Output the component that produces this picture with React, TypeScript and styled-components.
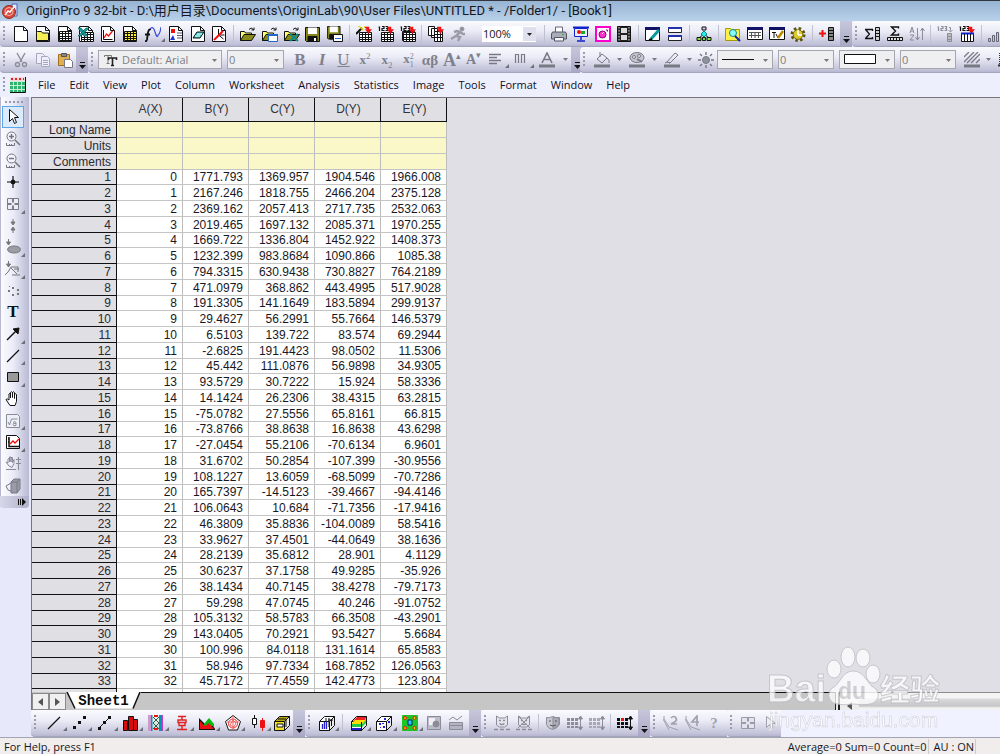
import React from 'react';
import styled, { createGlobalStyle, css } from 'styled-components';

const UI = '"Open Sans", "Noto Sans", "Noto Sans CJK SC", sans-serif';
const GREY = '#8b8d98';

const GlobalStyle = createGlobalStyle`
  * { box-sizing: border-box; }
  body { margin: 0; background: #e6e8fa; font-family: ${UI}; color: #1a1a22; }
  button, select { font: inherit; color: inherit; margin: 0; padding: 0; border: 0; background: none; }
`;

const Window = styled.div`
  display: flex;
  flex-direction: column;
  height: 100vh;
  min-width: 0;
  overflow: hidden;
`;

const TitleBar = styled.header`
  display: flex;
  align-items: center;
  gap: 8px;
  height: 21px;
  flex: none;
  padding: 0 2px;
  border-top: 1px solid #33363c;
  background: linear-gradient(#97b3d3, #b9d1ea);
`;

const Title = styled.h1`
  margin: 0;
  font-family: Roboto, "Noto Sans CJK SC", sans-serif;
  font-size: 13px;
  line-height: 18px;
  font-weight: 400;
  color: #15181e;
  white-space: nowrap;
`;

const DockRow = styled.div`
  display: flex;
  flex: none;
  height: 26px;
  overflow: hidden;
  background: #e9ebfa;
`;

const Bar = styled.div<{ $w?: number }>`
  display: flex;
  align-items: center;
  flex: none;
  height: 100%;
  ${p => p.$w && css`width: ${p.$w}px;`}
  border-bottom: 1px solid #a3a5bd;
  border-radius: 4px 0 0 4px;
  background: linear-gradient(#fafbfe 0%, #ebecf6 40%, #c3c3da 90%, #b5b5cf 100%);
`;

const Grip = styled.i`
  flex: none;
  width: 3px;
  height: 16px;
  margin: 0 4px 0 3px;
  background: radial-gradient(circle at 1px 1px, #9a9cae 1px, transparent 1px) 0 0 / 3px 4px;
`;

const Group = styled.div`
  display: flex;
  align-items: center;
  flex: none;
`;

const Tool = styled.button<{ $w?: number }>`
  display: flex;
  align-items: center;
  justify-content: center;
  position: relative;
  flex: none;
  width: ${p => p.$w ?? 22}px;
  height: 22px;
  ${p => !p.$w && css`&:nth-child(3n) { width: 21px; }`}
`;

const Corner = styled.i`
  position: absolute;
  right: 0;
  bottom: 3px;
  border: 2px solid transparent;
  border-right-color: #6d6f78;
  border-bottom-color: #6d6f78;
`;

const Glyph = styled.span<{ $size?: number; $italic?: boolean; $under?: boolean; $color?: string; $bold?: boolean }>`
  font-family: "Liberation Serif", serif;
  font-size: ${p => p.$size ?? 17}px;
  line-height: 18px;
  font-weight: ${p => (p.$bold ? 700 : 400)};
  font-style: ${p => (p.$italic ? 'italic' : 'normal')};
  text-decoration: ${p => (p.$under ? 'underline' : 'none')};
  color: ${p => p.$color ?? '#7f818c'};
  white-space: nowrap;
  sup, sub { font-size: 9px; line-height: 0; font-weight: 400; }
`;

const Scripts = styled.span`
  display: inline-flex;
  flex-direction: column;
  vertical-align: middle;
  font-size: 8px;
  line-height: 8px;
  font-weight: 400;
`;

const Sep = styled.i`
  flex: none;
  width: 1px;
  height: 18px;
  margin: 0 3px;
  background: #c0c1d0;
`;

const OverflowButton = styled.button`
  display: flex;
  flex: none;
  align-items: flex-end;
  justify-content: center;
  width: 12px;
  height: 100%;
  margin-left: auto;
  padding-bottom: 3px;
  background: linear-gradient(#c6c7db, #a9a9c6);
`;

const Caret = styled.button`
  display: flex;
  align-items: center;
  justify-content: center;
  flex: none;
  width: 11px;
  height: 20px;
`;

const ComboBox = styled.label<{ $w: number; $live?: boolean }>`
  position: relative;
  display: flex;
  align-items: center;
  flex: none;
  width: ${p => p.$w}px;
  height: ${p => (p.$live ? 16 : 19)}px;
  margin-right: 5px;
  ${p => p.$live && css`margin-left: 13px;`}
  border: ${p => (p.$live ? '0' : '1px solid #a6a7ae')};
  background: ${p => (p.$live ? '#fff' : '#efeff1')};
  font-size: 11px;
  color: ${p => (p.$live ? '#16161c' : '#7d7e86')};
  select {
    width: 100%;
    height: 100%;
    padding-left: ${p => (p.$w > 100 ? 23 : 1)}px;
    appearance: none;
    outline: 0;
    line-height: 16px;
  }
  svg { position: absolute; pointer-events: none; }
  .mark { left: 3px; }
  .arrow { right: 0; }
`;

const MenuBar = styled.nav`
  display: flex;
  align-items: center;
  flex: none;
  height: 24px;
  background: #eeeffc;
`;

const MenuItem = styled.button`
  margin-right: 14px;
  font-size: 11px;
  line-height: 20px;
  font-weight: 500;
  color: #10101f;
`;

const BookButton = styled.button`
  display: flex;
  margin-right: 12px;
`;

const Body = styled.div`
  display: flex;
  flex: 1;
  min-height: 0;
`;

const SideDock = styled.aside`
  flex: none;
  width: 31px;
  background: #e7e9fb;
`;

const SideBar = styled.div`
  display: flex;
  flex-direction: column;
  width: 29px;
  padding: 3px 0 0 1px;
  border-left: 1px solid #b6b8d2;
  border-radius: 0 0 4px 4px;
  background: linear-gradient(90deg, #fbfcff, #e9ebf7 45%, #b9bad3);
`;

const SideGrip = styled.i`
  width: 18px;
  height: 3px;
  margin: 1px 0 2px 3px;
  background: radial-gradient(circle at 1px 1px, #9a9cae 1px, transparent 1px) 0 0 / 4px 3px;
`;

const SideTool = styled.button<{ $active?: boolean }>`
  position: relative;
  display: flex;
  align-items: center;
  justify-content: center;
  width: 22px;
  height: 22px;
  border: 1px solid ${p => (p.$active ? '#59a7e8' : 'transparent')};
  background: ${p => (p.$active ? '#dcebfb' : 'none')};
  &:nth-child(3n) { height: 21px; }
  ${Corner} { right: -2px; bottom: 0; }
`;

const SideOverflow = styled.button`
  display: flex;
  align-items: center;
  justify-content: flex-end;
  height: 12px;
  margin-left: -2px;
  padding-right: 3px;
  border-radius: 0 0 4px 4px;
  background: linear-gradient(90deg, #d6d7e8, #b0b1cb);
`;

const Main = styled.main`
  display: flex;
  flex-direction: column;
  flex: 1;
  min-width: 0;
`;

const Workspace = styled.section`
  flex: 1;
  min-height: 0;
  overflow: hidden;
  border-top: 1px solid #77777b;
  border-left: 1px solid #77777b;
  background: #e0dfe5;
`;

const Sheet = styled.table`
  width: 415px;
  table-layout: fixed;
  border-collapse: separate;
  border-spacing: 0;
  font-family: "Liberation Sans", Arial, sans-serif;
  font-size: 12px;
  line-height: 14px;
  th, td { padding: 0 5px 0 0; text-align: right; font-weight: 400; white-space: nowrap; }
`;

const ColumnHead = styled.th`
  height: 24px;
  && { padding: 0 0 2px 2px; text-align: center; }
  border-right: 1px solid #111;
  border-bottom: 1px solid #111;
  background: #e0dfe4;
  color: #33343a;
`;

const SheetRow = styled.tr`
  height: 16px;
  &:nth-child(4n) { height: 15px; }
`;

const RowHead = styled.th`
  border-right: 1px solid #111;
  border-bottom: 1px solid #111;
  background: #e0dfe4;
  color: #2a2a33;
`;

const Cell = styled.td<{ $label?: boolean }>`
  border-right: 1px solid #bdbdbd;
  border-bottom: 1px solid #c4c4c4;
  background: ${p => (p.$label ? '#faf8c8' : '#fff')};
  color: #18181f;
`;

const SheetTabs = styled.div`
  display: flex;
  flex: none;
  height: 18px;
  background: #c6c6c6;
  border-left: 1px solid #77777b;
`;

const NavButton = styled.button`
  display: flex;
  align-items: center;
  justify-content: center;
  width: 17px;
  height: 17px;
  margin-top: 1px;
  border: 1px solid #8b8b8b;
  background: #f0f0f0;
`;

const Tab = styled.button`
  position: relative;
  width: 75px;
  height: 18px;
  font-family: "Liberation Mono", monospace;
  font-size: 14px;
  line-height: 17px;
  font-weight: 700;
  color: #0c0c0c;
  svg { position: absolute; left: 0; top: 0; }
  span { position: relative; }
`;

const TabRail = styled.div`
  flex: 1;
  border-top: 1px solid #111;
`;

const Splitter = styled.div`
  width: 5px;
  border-left: 1px solid #222;
  border-right: 2px solid #222;
  background: #e8e8e8;
`;

const Scroll = styled.div`
  display: flex;
  width: 160px;
  border-top: 1px solid #8d8d8d;
  background: linear-gradient(#f4f4f4 0 5px, #dadadc 6px, #c6c6c8 13px, #f2f2f2 15px);
`;

const ScrollButton = styled.button`
  width: 19px;
  background: #ececec;
`;

const BottomDock = styled.div`
  display: flex;
  flex: none;
  height: 27px;
  overflow: hidden;
  background: #f0f3ff;
`;

const StatusBar = styled.footer`
  display: flex;
  align-items: center;
  flex: none;
  height: 17px;
  padding: 0 24px 0 4px;
  border-top: 1px solid #a2a4b4;
  background: #f0edec;
  font-size: 11px;
  line-height: 15px;
  font-weight: 500;
  white-space: nowrap;
  color: #17171c;
`;

const StatusCell = styled.span<{ $push?: boolean }>`
  margin-left: ${p => (p.$push ? 'auto' : '5px')};
  padding-right: 1px;
  border-right: 1px solid #cfcbca;
`;

const Watermark = styled.div`
  position: fixed;
  right: 54px;
  bottom: 20px;
  width: 180px;
  height: 88px;
  pointer-events: none;
  opacity: 0.75;
  svg { display: block; }
`;

/* ---------- icons ---------- */

const Svg = ({ children, size = 16 }: { children: React.ReactNode; size?: number }) => (
  <svg width={size} height={size} viewBox="0 0 16 16" fill="none" stroke="#111" strokeWidth="1" aria-hidden="true">
    {children}
  </svg>
);

const page = <path d="M1.5.5h9l4 4v11h-13zM10.500.5v4h4" fill="#fff" />;
const grid = (x: number, y: number, fill = '#fff', color = '#111') => (
  <g>
    <path d={`M${x}.5 ${y}.5h12v9h-12z`} fill={fill} stroke={color} />
    <path d={`M${x} ${y + 2}.5h12M${x} ${y + 5}.5h12M${x} ${y + 7}.5h12M${x + 3}.5 ${y}v10M${x + 6}.5 ${y}v10M${x + 9}.5 ${y}v10`} stroke={color} />
  </g>
);
const redArrow = <path d="M9 1.500h3.500v3M10.500 4l2 2.500 2-2.500z" stroke="#e11" fill="#e11" strokeWidth="1.500" />;
const digits = <path d="M.5 1h1v4M4 .5h2v2h-2v2h2.500M7.500.5h2v4h-2M8 2.500h1.500" strokeWidth="1.200" fill="none" />;
const openFolder = (
  <g>
    <path d="M.5 14.500v-9h4l1 1.500h6v2" fill="#ffff70" />
    <path d="M.5 14.500l3.500-6h11.500l-4 6z" fill="#8a8a18" />
    <path d="M9 3.500q2-3 4.500 0M14 1.500v2.500h-2.500" />
  </g>
);
const floppy = (x: number, y: number, s: number) => (
  <g transform={`translate(${x} ${y}) scale(${s})`}>
    <path d="M.5.5h14v14h-13l-1-1z" fill="#84841a" />
    <path d="M3 .5h9v6.500h-9z" fill="#fff" stroke="none" />
    <path d="M3 9.500h9v5h-9z" fill="#111" />
    <path d="M9 11h2v3h-2z" fill="#fff" stroke="none" />
  </g>
);
const cube = (face: string, top: string) => (
  <g>
    <path d="M.5 6.500l5-5h10l-5 5z" fill={top} />
    <path d="M.5 6.500h10v9h-10z" fill={face} />
    <path d="M10.500 6.500l5-5v9l-5 5z" fill="#e8e8e8" />
  </g>
);
const cat = (color: string) => (
  <g stroke={color}>
    <path d="M2.500 10v-9l3 2h5l3-2v9l-3 2h-5z" fill="#e4e4ec" />
    <path d="M5 5.500h2M9 5.500h2M5.500 8.500q2.500 2 5 0M0 14.500h4M6 14.500h4M12 14.500h4" strokeWidth="1.500" />
  </g>
);
const dots = (color: string, first = color) => (
  <g stroke="none" fill={color}>
    <path d="M4 3h3v3h-3z" fill={first} />
    <path d="M0 3h3v3h-3zM8 3h3v3h-3zM0 7h3v3h-3zM4 7h3v3h-3zM8 7h3v3h-3zM0 11h3v2h-3zM4 11h3v2h-3zM8 11h3v2h-3z" />
    <path d="M13.500 2v12M11.500 4l2-3 2 3zM11.500 12l2 3 2-3z" stroke={color === '#111' ? '#111' : GREY} />
  </g>
);

const icons: Record<string, React.ReactNode> = {
  newPage: page,
  newFolder: <g>{page}<path d="M1.500 14.500v-8l1-1h4l1 1.500h6v7.500z" fill="#f5ef55" /></g>,
  newSheet: <g>{page}{grid(2, 5)}</g>,
  excel: <g>{page}{grid(3, 6)}<path d="M0 2l3 0 7 8h-4zM8 2h3l-8 8h-3z" fill="#18a0a0" stroke="#055" strokeWidth=".6" /></g>,
  graph: <g>{page}<path d="M3.500 4v9.500h9" /><path d="M4 12l2.500-4 2 2 4-5" stroke="#e11" strokeWidth="1.300" /></g>,
  matrix: <g>{page}{grid(2, 5, '#ffee30')}</g>,
  func: <g><path d="M6 3.500q-2-1-3 3l-1 7q-1 3-2 1M0 8.500h5" strokeWidth="1.800" /><path d="M5 3q3-4 5 3t3 3q2-1 3-8" stroke="#3b49d8" strokeWidth="1.200" /></g>,
  layout: <g>{page}<path d="M3 3h4v4h-4z" fill="#e11" stroke="none" /><path d="M2 14l3-5 2 5z" fill="#23c" stroke="none" /><path d="M9 7h5M9 9.500h5M9 12h5" stroke="#557" /></g>,
  notes: <g>{page}<path d="M3 12l4-6h7l-4 6z" fill="#37c6c6" /><path d="M5 10h5M7 8h5" stroke="#fff" /></g>,
  plot3d: <g>{page}<path d="M7.500 3v6l5 4M7.500 9h6" /><path d="M3 14l9-9" stroke="#e11" strokeWidth="2" /></g>,
  open: openFolder,
  openTpl: <g>{openFolder}<path d="M6.500 8.500h9v7h-9z" fill="#fff" stroke="#26c" /><path d="M7 9.500h8" stroke="#26c" /></g>,
  openXl: <g>{openFolder}<path d="M6 8l8 7M14 8l-8 7" stroke="#0a8a8a" strokeWidth="2" /></g>,
  save: floppy(0, 1, 1),
  saveTpl: <g>{floppy(0, 0, 0.9)}<path d="M6.500 8.500h9v7h-9z" fill="#fff" /><path d="M8 12.500h6" stroke="#26c" /></g>,
  wizard: <g>{grid(3, 6)}<path d="M0 8l6-6" strokeWidth="2" /><path d="M4 1l3 3M3 0v1M8 1h1" stroke="#dc0" strokeWidth="1.500" />{redArrow}</g>,
  import1: <g>{grid(3, 6)}{digits}{redArrow}</g>,
  importN: <g>{grid(2, 5, '#ccc')}{grid(3, 6)}{digits}{redArrow}</g>,
  dup: <g><path d="M.5.5h6v9h-6zM3.500 2.500h6v9h-6z" fill="#fff" /><path d="M6.500 5.500h8v10h-8z" fill="#fff" /><path d="M6 8.500h9M6 11.500h9M9.500 6v9M12.500 6v9" />{redArrow}</g>,
  run: <g stroke="#9a9ca7"><path d="M10 6l-4 4 4 1-2 4M6 10l-5 3M4 6l3-1 3 1 3 2h2" strokeWidth="2.500" /><circle cx="12" cy="3" r="2" fill={GREY} /></g>,
  print: <g><path d="M4.500 6v-5h7v5" fill="#fff" stroke="#667" /><path d="M1.500 6h13l1 2v5h-15v-5z" fill="#a9adb8" stroke="#556" /><path d="M3.500 11.500h9v3.500h-9z" fill="#f6f6f6" stroke="#556" /><path d="M11 8.500h2" stroke="#2b2" /></g>,
  slide: <g><path d="M0 1.500h16" stroke="#12c" strokeWidth="2" /><path d="M1.500 2.500h13v8h-13z" fill="#e8f0ff" stroke="#12c" /><circle cx="6" cy="6" r="2" fill="#e11" stroke="none" /><path d="M8 5h4v3h-4z" fill="#2a2" stroke="none" /><path d="M8 11v3M4 15h8" stroke="#12c" strokeWidth="1.500" /></g>,
  capture: <g><path d="M1 1h14v14h-14z" fill="#fff" stroke="#f0c" strokeWidth="2" /><circle cx="7.500" cy="8.500" r="3.500" fill="#f3c" stroke="#808" /><path d="M7 8l2-2" stroke="#fff" /><path d="M11 4h1.500v1.500" stroke="#808" /></g>,
  film: <g><path d="M1.500.5h13v15h-13z" fill="#222" /><path d="M5 2h6v5h-6zM5 9h6v5h-6z" fill="#ddd" stroke="none" /><path d="M3 1v15M13 1v15" stroke="#ddd" strokeDasharray="1.500 1.500" /></g>,
  winEdit: <g><path d="M.5 2.500h14v12h-14z" fill="#fff" /><path d="M0 2.500h15" stroke="#116" strokeWidth="3" /><path d="M6 13l8-9" stroke="#0a9a9a" strokeWidth="3" /><path d="M4 14l3-1" strokeWidth="2" /></g>,
  bars2: <g><path d="M1.500 1.500h13v5h-13zM1.500 9.500h13v5h-13z" fill="#fff" stroke="#222" /><path d="M1 2h14M1 10h14" stroke="#23a" strokeWidth="2" /></g>,
  tree: <g><path d="M8 5v3M3 12l5-4 5 4" /><path d="M6 1h4v3h-4z" fill="#cce" /><path d="M8 5l3 3-3 3-3-3z" fill="#2ee" stroke="#088" /><path d="M1 11.500h4v3h-4zM6.500 11.500h3v3h-3zM11 11.500h4v3h-4z" fill="#8d4" /></g>,
  find: <g><path d="M.5 2.500h5l1 1h8v11h-14z" fill="#fbf04a" stroke="#a90" /><circle cx="8" cy="7" r="3.500" fill="#8ff" stroke="#188" /><path d="M10 10l5 5" stroke="#12a" strokeWidth="2" /></g>,
  results: <g><path d="M.5 1.500h15v12h-15z" fill="#fff" /><path d="M0 2.500h16" stroke="#116" strokeWidth="3" /><path d="M2 6.500h12M2 9.500h12M4.500 6v6M8 6v6M11.500 6v6" stroke="#555" /></g>,
  script: <g><path d="M.5 1.500h15v12h-15z" fill="#fff" /><path d="M0 2.500h16" stroke="#116" strokeWidth="3" /><path d="M3 6.500h4M5 6v6M7 8l2 4" /><path d="M9 12l5-7" stroke="#b80" strokeWidth="2.500" /></g>,
  gear: <g><circle cx="8" cy="8.500" r="6" stroke="#5c5208" strokeWidth="3" strokeDasharray="2.400 2.300" /><circle cx="8" cy="8.500" r="4.800" fill="#dcc828" stroke="#7a6c10" /><path d="M8 4v5M8 9h4" stroke="#fff" strokeWidth="1.500" /></g>,
  addCol: <g><path d="M0 7.500h7M3.500 4v7" stroke="#e11" strokeWidth="2" /><path d="M9.500 1.500h5v13h-5z" fill="#888" /><path d="M9 4.500h6M9 7.500h6M9 10.500h6" /></g>,
  sumCol: <g><path d="M7.500 5v-1.500h-7l4 4.500-4 4.500h7v-1.500" strokeWidth="1.300" /><path d="M10.500 1.500h4v13h-4z" fill="#ccc" /><path d="M10 4.500h5M10 7.500h5M10 10.500h5" /></g>,
  sumRow: <g><path d="M11.500 2.500v-1.500h-7l4 4-4 4h7v-1.500" strokeWidth="1.400" /><path d="M.5 11.500h15v3h-15z" fill="#ddd" /><path d="M3.500 11v4M6.500 11v4M9.500 11v4M12.500 11v4" /></g>,
  sort: <g stroke={GREY}><path d="M1 7l2-6 2 6M2 5h2M1 9h4l-4 5h4M8.500 2v12M6.500 11l2 3 2-3M13.500 14v-12M11.500 5l2-3 2 3" /></g>,
  setCol: <g stroke={GREY}>{digits}<path d="M12 1.500h1.500v3M11.500 4l2 2 2-2" /><path d="M10.500 7.500h4v8h-4z" fill="#bbb" /><path d="M10 10.500h5M10 13.500h5" /></g>,
  setRow: <g>{digits}{redArrow}<path d="M2.500 7.500h12v8h-12z" fill="#fff" /><path d="M2 7.500h13" stroke="#12c" strokeWidth="2" /><path d="M5.500 8v7M8.500 8v7M11.500 8v7" /></g>,
  stats: <g stroke="#667" fill="#ccc"><path d="M.5 12.500h2v3h-2zM4.500 9.500h2v6h-2zM8.500 6.500h2v9h-2zM12.500 2.500h2v13h-2z" /></g>,
  cut: <g stroke={GREY} strokeWidth="1.400"><path d="M4 1l5 9M12 1l-5 9" /><circle cx="4.500" cy="12.500" r="2" /><circle cx="11.500" cy="12.500" r="2" /></g>,
  copy: <g stroke="#a5a8b5"><path d="M1.500 1.500h6l2 2v8h-8z" fill="#eef" /><path d="M6.500 4.500h6l2 2v8h-8z" fill="#eef" /><path d="M8 8.500h5M8 10.500h5M8 12.500h5" /></g>,
  paste: <g><path d="M1.500 2.500h11v11h-11z" fill="#e0b050" stroke="#a07020" /><path d="M4.500 1.500h5v3h-5z" fill="#888" stroke="#555" /><path d="M7.500 7.500h6l2 2v6h-8z" fill="#fff" stroke="#778" /></g>,
  align: <path d="M0 2.500h12M0 5.500h8M0 8.500h12M0 11.500h8" stroke="#777983" strokeWidth="1.300" />,
  cols: <g stroke="#777983"><path d="M1.500 2v9M4.500 2v9M7.500 2v9M10.500 2v9M1 2.500h3M7 2.500h4" strokeWidth="1.200" /></g>,
  fill: <g stroke="#777983"><path d="M3 7l5-5 5 4-5 5zM6 0v5M13 6q3 2 2 5" /><path d="M0 14h16" strokeWidth="3" /></g>,
  palette: <g stroke="#777983"><ellipse cx="8" cy="5.500" rx="7" ry="5" fill="#c4c5cd" /><circle cx="5" cy="5" r="1.500" fill="#eee" /><circle cx="10" cy="4" r="1.500" fill="#eee" /><path d="M8 7l5 3" strokeWidth="2" /><path d="M0 14h16" strokeWidth="3" /></g>,
  pencil: <g stroke="#777983"><path d="M3 10l8-9 3 2-8 8zM3 10l3 1M1 11l2-1" /><path d="M0 14h16" strokeWidth="3" /></g>,
  sun: <g stroke="#777983"><circle cx="8" cy="8" r="3.500" fill="#8f919c" /><path d="M8 0v3M8 13v3M0 8h3M13 8h3M2 2l2 2M12 12l2 2M2 14l2-2M12 4l2-2" strokeWidth="1.400" /></g>,
  hatch: <g stroke="#777983"><path d="M0 5l5-5M0 10l10-10M3 11l11-11M7 11l9-9M12 11l4-4" strokeWidth="1.300" /><path d="M0 14h16" strokeWidth="3" /></g>,
  dotted: <g stroke="#333"><path d="M2.500 1v12h13" strokeDasharray="1 1" /><path d="M1 13.500h15" strokeWidth="2" /></g>,
  // side tools
  pointer: <path d="M4.500.5v12l3-3 2 5 2-1-2-5h4z" fill="#fff" />,
  zoomIn: <g stroke="#72747f"><circle cx="6.500" cy="5.500" r="4.500" fill="#f4f5fb" /><path d="M4 5.500h5M6.500 3v5M10 9l5 5" strokeWidth="1.500" /><path d="M1.500 12v2.500h8v-2.500M4.500 13v1M6.500 13v1" /></g>,
  zoomOut: <g stroke="#72747f"><circle cx="6.500" cy="5.500" r="4.500" fill="#f4f5fb" /><path d="M4 5.500h5M10 9l5 5" strokeWidth="1.500" /><path d="M1.500 12v2.500h8v-2.500M4.500 13v1M6.500 13v1" /></g>,
  cross: <g><path d="M8 2v12M2 8h12" strokeWidth="1.200" /><circle cx="8" cy="8" r="2" fill="#111" /></g>,
  reader: <g stroke="#7b7d88"><path d="M2.500 2.500h11v11h-11z" fill="#eceef7" /><path d="M8 3v3.500M8 9.500v3.500M3 8h3.500M9.500 8h3.500" strokeWidth="2" /></g>,
  range: <g stroke="#777" fill="#777"><path d="M8 1v5M6 4l2 3 2-3zM8 15v-4M6 12l2-3 2 3z" /></g>,
  mask: <g stroke="#777"><path d="M3.500 0v5M1.500 3l2 3 2-3z" fill="#777" /><ellipse cx="9" cy="10.500" rx="6.500" ry="3.500" fill="#9b9ca4" /></g>,
  drawData: <g stroke="#777"><path d="M3.500 0v5M1.500 3l2 3 2-3z" fill="#777" /><path d="M0 14l3-3 3-5h7v5M7 14h8M6 7l6 6M9 8h5" /></g>,
  points: <g fill="#777" stroke="none"><path d="M3 7h2v2h-2zM7 4h2v2h-2zM12 6h2v2h-2zM7 11h2v2h-2zM12 10h2v2h-2zM4 3h1v1h-1z" /></g>,
  arrow: <g><path d="M2 14l9-9" strokeWidth="1.500" /><path d="M8 3l6-1-1 6z" fill="#111" /></g>,
  line: <path d="M2 14l12-12" strokeWidth="1.300" />,
  rect: <path d="M2.500 3.500h11v9h-11z" fill="#999" />,
  hand: <path d="M5 14.500l-4-6q1-1.500 3 .5v-6q1-1.500 1.500 0v4-5.500q1-1.500 2 0v5-5q1-1.500 2 0v6-4q1.500-1.500 2 0v7l-1.500 4z" fill="#fff" />,
  formula: <g stroke="#8a8c98"><path d="M1.500 1.500h11l2 2v11h-13z" fill="#eef0f8" /><path d="M3 9l1.500 3 2-6h6M8 9.500q2-2 3 0v3q-3 1-3-1t3-1" /></g>,
  insGraph: <g><path d="M1.500 1.500h10l3 3v10h-13z" fill="#fff" /><path d="M4 3v9.500h10M3 5h1M3 8h1" strokeWidth="1.500" /><path d="M5 10l3-3 2 2 4-4" stroke="#e11" strokeWidth="1.300" /></g>,
  handAxis: <g stroke="#888a96"><path d="M4 10l-3-4 2 1v-4l1.500-1v4-5l1.500 0v5-4.500l1.500 0v5l1.500-3v4l-2 4zM13.500 1v13M11 3.500h5M11 7.500h5M1 13.500h10" /></g>,
  box: <g stroke="#777a86"><path d="M6 4l3-3h6v10l-3 4h-6z" fill="#999ba6" /><path d="M6 4h6v11M12 4l3-3M6 5l-5 3 2 4 3 1" /></g>,
  // bottom tools
  scatter: <g fill="#111" stroke="none"><path d="M1 11h3v3h-3zM6 6h3v3h-3zM11 1h3v3h-3z" /></g>,
  lineSym: <g fill="#111"><path d="M2 13l11-11" /><path d="M1 12h3v3h-3zM6 6h3v3h-3zM11 1h3v3h-3z" stroke="none" /></g>,
  columns: <path d="M.5 5.500h4v10h-4zM5.500 1.500h5v14h-5zM10.500 4.500h4v11h-4z" fill="#d90d0d" />,
  stack: <g><path d="M0 0h3v16h-3z" fill="#c9c" stroke="none" /><path d="M3 0h1.500v16h-1.500zM11 0h2v16h-2z" fill="#09a" stroke="none" /><path d="M5 2l6 6-6 6M11 2l-6 6 6 6" stroke="#263" /><path d="M14 0v16" stroke="#c3c" strokeWidth="2" /><path d="M6 1h4M6 14h4" stroke="#e11" strokeWidth="2" /></g>,
  boxplot: <g stroke="#d22"><path d="M4 1.500h8M8 2v3M4 5h8v2.500h-8zM5 8v2.500h6v-2.500M8 11v3M3 14.500h10" strokeWidth="1.400" /></g>,
  area: <g stroke="none"><path d="M0 3l6 6 5-3 5 8v1h-16z" fill="#111" /><path d="M5 9l5-6 5 6v2h-10z" fill="#0b1" /><path d="M1 6l5 5 4-3 5 6h-14z" fill="#e11" /></g>,
  radar: <g><path d="M8 .5l7.500 6-3 8.500h-9l-3-8.500z" fill="#fff" /><circle cx="8" cy="8.500" r="4.500" stroke="#e22" /><path d="M8 5l3 3-2 4-4-2zM8 1v14M2 7h12" stroke="#e66" /></g>,
  candle: <g><path d="M4.500 0v13" /><path d="M12.500 3v13" stroke="#e11" /><path d="M2.500 3.500h4v6h-4z" fill="#fff" /><path d="M10.500 5.500h4v7h-4z" fill="#e11" stroke="#e11" /></g>,
  templates: <g>{cube('#f3e02c', '#b8a810')}<path d="M3 9h6v3h-6z" fill="#fff" /><path d="M12 5v7M4 4h8" /></g>,
  bars3d: <g>{cube('#fff', '#fff')}<path d="M3.500 14v-5M5.500 14v-7M7.500 14v-8" stroke="#22c" strokeWidth="1.300" /><path d="M7 3v4M10 3v9M12.500 5v6M9 5h5" /></g>,
  surface: <g>{cube('#fff', '#fff')}<path d="M2 6l4-4h9l-1 4z" fill="#e22" stroke="none" /><path d="M1 8l3-3h11l-4 4h-10z" fill="#fd0" stroke="none" /><path d="M1 9h10l4-4v3l-4 4h-10z" fill="#2c4" stroke="none" /><path d="M1 14h9" stroke="#22c" strokeWidth="2" /><path d="M10.500 7v9" /></g>,
  scatter3d: <g>{cube('#fff', '#fff')}<path d="M3 8h2v2h-2zM7 11h2v2h-2zM8 3h2v2h-2zM12 6h2v2h-2zM6 8h2v1h-2zM4 12h1v1h-1z" fill="#22d" stroke="none" /></g>,
  contour: <g><path d="M.5.5h15v15h-15z" fill="#1cc52a" stroke="#1cc52a" /><path d="M6 5h4v5h-4z" fill="#2cf" stroke="#126" /><circle cx="3" cy="3" r="1.500" fill="#fc0" stroke="#e11" /><circle cx="12.500" cy="3" r="1.500" fill="#fc0" stroke="#e11" /><circle cx="3" cy="13" r="1.500" fill="#fc0" stroke="#e11" /><circle cx="12.500" cy="13" r="1.500" fill="#fc0" stroke="#e11" /></g>,
  image: <g stroke="#8a8c98"><path d="M1.500 1.500h13v13h-13z" fill="#bcbdc8" /><path d="M3 3h6v4l-2 3h-4z" fill="#f0f0f6" stroke="none" /><circle cx="10" cy="9" r="3" fill="#8a8c98" /></g>,
  profile: <g stroke="#8a8c98"><path d="M1.500 7.500h13v7h-13z" fill="#b4b5c2" /><path d="M1 5l4-3 4 3 5-4M1 10.500h13" /></g>,
  cat: cat(GREY),
  catX: <g>{cat(GREY)}<path d="M2 1l12 12M14 1l-12 12" stroke={GREY} /></g>,
  shield: <g stroke={GREY}><path d="M1.500 2.500q3 1 6-1 3 2 7 1v7q-2 4-7 5-5-1-6-5z" fill="#c7c8d2" /><path d="M8 2v12q5-2 6-5v-6z" fill="#a8aab6" /><path d="M4 6h2M10 6h2M5 10q3 2 6 0" stroke="#555" /></g>,
  dotsGrey: dots(GREY),
  dotsLight: dots('#a7a8b4'),
  dotsRed: dots('#111', '#e11'),
  layer2: <g stroke="#a0a1ac"><path d="M1 1v3l5 8 9 3M0 4l6 11" /><path d="M8 3q3-3 5 0t-5 6h6" strokeWidth="1.700" /></g>,
  layer4: <g stroke="#a0a1ac"><path d="M1 1v3l5 8 9 3M0 4l6 11" /><path d="M14 7h-7l5-6v10" strokeWidth="1.700" /></g>,
  swap: <g stroke="#9a9ba6"><path d="M1.500 2.500h13v11h-13z" fill="#e2e3ef" /><path d="M8 3v3.500M8 9.500v3.500M2 8h4M10 8h4" strokeWidth="2" /></g>,
  pick: <path d="M4.500 1.500v11l3-3 2 4 1.500-1-1.500-4h4z" fill="#eee" stroke="#a0a1ac" />,
};

type ItemProps = { n: string; w?: number; corner?: boolean };
const T = ({ n, w, corner }: ItemProps) => (
  <Tool $w={w} aria-label={n}>
    <Svg>{icons[n]}</Svg>
    {corner && <Corner />}
  </Tool>
);
const G = ({ list }: { list: string[] }) => <Group>{list.map(n => <T key={n} n={n} />)}</Group>;

const Overflow = () => (
  <OverflowButton aria-label="Toolbar options">
    <svg width="7" height="7" viewBox="0 0 7 7" fill="#111"><path d="M1 0h5v1h-5zM0 3h7l-3.500 4z" /></svg>
  </OverflowButton>
);

const Drop = ({ label }: { label: string }) => (
  <Caret aria-label={label}>
    <svg width="5" height="3" viewBox="0 0 5 3" fill="#777983"><path d="M0 0h5l-2.500 3z" /></svg>
  </Caret>
);

const Combo = ({ w, value, label, live, mark }: { w: number; value: string; label: string; live?: boolean; mark?: React.ReactNode }) => (
  <ComboBox $w={w} $live={live}>
    <select aria-label={label} defaultValue={value}><option value={value}>{value}</option></select>
    {mark}
    <svg className="arrow" width="13" height="14" viewBox="0 0 13 14">
      {live && <path d="M0 0h13v14h-13z" fill="#dfe0ee" />}
      <path d="M4 6h5l-2.500 3z" fill={live ? '#222' : '#777'} />
    </svg>
  </ComboBox>
);

const menus = ['File', 'Edit', 'View', 'Plot', 'Column', 'Worksheet', 'Analysis', 'Statistics', 'Image', 'Tools', 'Format', 'Window', 'Help'];

const sideTools: [string, boolean?][] = [
  ['pointer'], ['zoomIn'], ['zoomOut'], ['cross'], ['reader', true], ['range'], ['mask', true], ['drawData', true], ['points'],
  ['text'], ['arrow', true], ['line', true], ['rect', true], ['hand'], ['formula', true], ['insGraph', true], ['handAxis'], ['box'],
];

const columns = ['A(X)', 'B(Y)', 'C(Y)', 'D(Y)', 'E(Y)'];
const labelRows = ['Long Name', 'Units', 'Comments'];
const data = `1771.793 1369.957 1904.546 1966.008
2167.246 1818.755 2466.204 2375.128
2369.162 2057.413 2717.735 2532.063
2019.465 1697.132 2085.371 1970.255
1669.722 1336.804 1452.922 1408.373
1232.399 983.8684 1090.866 1085.38
794.3315 630.9438 730.8827 764.2189
471.0979 368.862 443.4995 517.9028
191.3305 141.1649 183.5894 299.9137
29.4627 56.2991 55.7664 146.5379
6.5103 139.722 83.574 69.2944
-2.6825 191.4423 98.0502 11.5306
45.442 111.0876 56.9898 34.9305
93.5729 30.7222 15.924 58.3336
14.1424 26.2306 38.4315 63.2815
-75.0782 27.5556 65.8161 66.815
-73.8766 38.8638 16.8638 43.6298
-27.0454 55.2106 -70.6134 6.9601
31.6702 50.2854 -107.399 -30.9556
108.1227 13.6059 -68.5099 -70.7286
165.7397 -14.5123 -39.4667 -94.4146
106.0643 10.684 -71.7356 -17.9416
46.3809 35.8836 -104.0089 58.5416
33.9627 37.4501 -44.0649 38.1636
28.2139 35.6812 28.901 4.1129
30.6237 37.1758 49.9285 -35.926
38.1434 40.7145 38.4278 -79.7173
59.298 47.0745 40.246 -91.0752
105.3132 58.5783 66.3508 -43.2901
143.0405 70.2921 93.5427 5.6684
100.996 84.0118 131.1614 65.8583
58.946 97.7334 168.7852 126.0563
45.7172 77.4559 142.4773 123.804`.split('\n').map((line, i) => [String(i), ...line.split(' ')]);

export default function App() {
  return (
    <Window>
      <GlobalStyle />
      <TitleBar>
        <svg width="16" height="16" viewBox="0 0 16 16">
          <path d="M10 1h5v12h-5z" fill="#e8eefc" stroke="#4463b8" />
          <circle cx="7" cy="9" r="6.500" fill="#d9483b" stroke="#8d2a22" />
          <path d="M3 12l3-4 2 1 4-5" stroke="#fff" strokeWidth="1.500" fill="none" />
          <circle cx="7" cy="8.500" r="4" fill="none" stroke="#f5b4aa" />
        </svg>
        <Title>OriginPro 9 32-bit - D:\用户目录\Documents\OriginLab\90\User Files\UNTITLED * - /Folder1/ - [Book1]</Title>
      </TitleBar>

      <DockRow>
        <Bar $w={852}>
          <Grip />
          <Group>
            {['newPage', 'newFolder', 'newSheet', 'excel', 'graph', 'matrix'].map(n => <T key={n} n={n} />)}
            <T n="func" w={25} corner />
            <T n="layout" /><T n="notes" /><T n="plot3d" />
          </Group>
          <Sep />
          <G list={['open', 'openTpl', 'openXl', 'save', 'saveTpl']} />
          <Sep />
          <G list={['wizard', 'import1', 'importN']} />
          <Sep />
          <G list={['dup', 'run']} />
          <Combo w={54} value="100%" label="Zoom" live />
          <Sep />
          <G list={['print', 'slide', 'capture', 'film']} />
          <Sep />
          <G list={['winEdit', 'bars2']} />
          <Sep />
          <G list={['tree']} />
          <Sep />
          <G list={['find', 'results', 'script', 'gear']} />
          <Sep />
          <G list={['addCol']} />
          <Overflow />
        </Bar>
        <Bar $w={170}>
          <Grip />
          <G list={['sumCol', 'sumRow', 'sort']} />
          <Sep />
          <G list={['setCol', 'setRow']} />
          <Sep />
          <G list={['stats']} />
        </Bar>
      </DockRow>

      <DockRow>
        <Bar $w={88}>
          <Grip />
          <G list={['cut', 'copy', 'paste']} />
          <Overflow />
        </Bar>
        <Bar $w={492}>
          <Grip />
          <Combo
            w={124}
            value="Default: Arial"
            label="Font"
            mark={
              <svg className="mark" width="16" height="14" viewBox="0 0 16 14" fill="none" stroke="#222">
                <path d="M2.500 4v-1.500h7v1.500M6 2.500v8M4.500 10.500h3" stroke="#777" />
                <path d="M6.500 7v-2h8v2M10.500 5v7.500M9 12.500h3" strokeWidth="1.600" />
              </svg>
            }
          />
          <Combo w={57} value="0" label="Font size" />
          <Group>
            <Tool><Glyph $bold>B</Glyph></Tool>
            <Tool><Glyph $bold $italic>I</Glyph></Tool>
            <Tool><Glyph $under>U</Glyph></Tool>
            <Tool><Glyph $size={13} $bold>x<sup>2</sup></Glyph></Tool>
            <Tool><Glyph $size={13} $bold>x<sub>2</sub></Glyph></Tool>
            <Tool><Glyph $size={13} $bold>x<Scripts><span>2</span><span>1</span></Scripts></Glyph></Tool>
            <Tool><Glyph $size={15} $bold>αβ</Glyph></Tool>
            <Tool><Glyph $size={18} $bold>A<sup>▴</sup></Glyph></Tool>
            <Tool><Glyph $size={14} $bold>A<sup>▾</sup></Glyph></Tool>
            <T n="align" w={25} corner />
            <T n="cols" w={25} corner />
          </Group>
          <Group>
            <Tool $w={26}>
              <svg width="18" height="16" viewBox="0 0 18 16" fill="none" stroke="#777983">
                <path d="M4 11l5-10 5 10M6 7.500h6" strokeWidth="1.600" /><path d="M1 14h16" strokeWidth="3" />
              </svg>
            </Tool>
            <Drop label="Font colour options" />
          </Group>
          <Overflow />
        </Bar>
        <Bar $w={450}>
          <Grip />
          <T n="fill" w={24} /><Drop label="Fill options" />
          <T n="palette" w={24} /><Drop label="Palette options" />
          <T n="pencil" w={24} /><Drop label="Line colour options" />
          <T n="sun" w={22} />
          <Combo w={56} value="" label="Line style" mark={<svg className="mark" width="34" height="11" stroke="#111"><path d="M1 5.500h32" /></svg>} />
          <Combo w={56} value="0" label="Line width" />
          <Combo w={56} value="" label="Border style" mark={<svg className="mark" width="34" height="11"><path d="M1.500.5h31v9h-31z" fill="#fff" stroke="#111" /></svg>} />
          <Combo w={56} value="0" label="Border width" />
          <T n="hatch" w={22} /><Drop label="Pattern options" />
          <T n="dotted" w={22} />
        </Bar>
      </DockRow>

      <MenuBar>
        <Grip />
        <BookButton aria-label="Book">
          <svg width="16" height="16" viewBox="0 0 16 16">
            <path d="M0 0h15v15h-15z" fill="#2db36e" /><path d="M0 0h15v4h-15z" fill="#f6d9dc" />
            <path d="M0 4.500h15M0 8.500h15M0 12.500h15M3.500 0v15M7.500 0v15M11.500 0v15" stroke="#c9eed8" />
            <path d="M1 2h13" stroke="#d22" strokeWidth="2" strokeDasharray="2 2" />
            <path d="M15.500 0v15.500h-15.500" fill="none" stroke="#111" />
          </svg>
        </BookButton>
        {menus.map(m => <MenuItem key={m}>{m}</MenuItem>)}
      </MenuBar>

      <Body>
        <SideDock>
          <SideBar>
            <SideGrip />
            <div>
              {sideTools.map(([n, corner], i) => (
                <SideTool key={n} $active={i === 0} aria-label={n}>
                  {n === 'text' ? <Glyph $size={17} $bold $color="#111">T</Glyph> : <Svg>{icons[n]}</Svg>}
                  {corner && <Corner />}
                </SideTool>
              ))}
            </div>
            <SideOverflow aria-label="More tools">
              <svg width="8" height="8" viewBox="0 0 8 8" fill="#111"><path d="M0 1h1v6h-1zM2 1h1v6h-1zM4 0l4 4-4 4z" /></svg>
            </SideOverflow>
          </SideBar>
        </SideDock>

        <Main>
          <Workspace>
            <Sheet>
              <colgroup>
                <col width={85} />
                {columns.map(c => <col key={c} width={66} />)}
              </colgroup>
              <thead>
                <tr><ColumnHead />{columns.map(c => <ColumnHead key={c} scope="col">{c}</ColumnHead>)}</tr>
              </thead>
              <tbody>
                {labelRows.map(l => (
                  <SheetRow key={l}><RowHead scope="row">{l}</RowHead>{columns.map(c => <Cell key={c} $label />)}</SheetRow>
                ))}
                {data.map((r, i) => (
                  <SheetRow key={i}><RowHead scope="row">{i + 1}</RowHead>{r.map((v, j) => <Cell key={j}>{v}</Cell>)}</SheetRow>
                ))}
                <SheetRow><RowHead />{columns.map(c => <Cell key={c} />)}</SheetRow>
              </tbody>
            </Sheet>
          </Workspace>

          <SheetTabs>
            <NavButton aria-label="Previous sheet"><svg width="5" height="8" fill="#555"><path d="M5 0v8l-5-4z" /></svg></NavButton>
            <NavButton aria-label="Next sheet"><svg width="5" height="8" fill="#555"><path d="M0 0v8l5-4z" /></svg></NavButton>
            <Tab>
              <svg width="75" height="18" viewBox="0 0 75 18"><path d="M1 0l8 16.500h58l7-16.500z" fill="#fff" /><path d="M1 0l8 16.500M67 16.500l7-16.500" stroke="#111" strokeWidth="1.500" /></svg>
              <span>Sheet1</span>
            </Tab>
            <TabRail />
            <Splitter />
            <Scroll><ScrollButton aria-label="Scroll left"><svg width="5" height="8" fill="#555"><path d="M5 0v8l-5-4z" /></svg></ScrollButton></Scroll>
          </SheetTabs>

          <BottomDock>
            <Bar $w={274}>
              <Grip />
              {['line', 'scatter', 'lineSym', 'columns', 'stack', 'boxplot', 'area', 'radar', 'candle'].map((n, i) => (
                <T key={n} n={n} w={i % 2 ? 25 : 26} corner />
              ))}
              <T n="templates" w={22} />
              <Overflow />
            </Bar>
            <Bar $w={176}>
              <Grip />
              <T n="bars3d" w={24} corner />
              <Sep />
              <T n="surface" w={25} corner /><T n="scatter3d" w={26} corner /><T n="contour" w={26} corner />
              <T n="image" w={22} /><T n="profile" w={22} />
              <Overflow />
            </Bar>
            <Bar $w={169}>
              <Grip />
              <G list={['cat', 'catX']} />
              <Sep />
              <G list={['shield', 'dotsGrey', 'dotsLight']} />
              <Sep />
              <G list={['dotsRed']} />
              <Overflow />
            </Bar>
            <Bar $w={77}>
              <Grip />
              <T n="layer2" /><T n="layer4" />
              <Tool><Glyph $size={15} $bold $color="#a0a1ac">?</Glyph></Tool>
            </Bar>
            <Bar $w={54}>
              <Grip />
              <G list={['swap', 'pick']} />
            </Bar>
          </BottomDock>
        </Main>
      </Body>

      <StatusBar>
        <span>For Help, press F1</span>
        <StatusCell $push>Average=0 Sum=0 Count=0</StatusCell>
        <StatusCell>AU : ON</StatusCell>
      </StatusBar>

      <Watermark aria-hidden="true">
        <svg width="180" height="88" viewBox="0 0 180 88" fill="#fff" stroke="#bdbdc4" strokeWidth="1">
          <ellipse cx="68" cy="23" rx="7" ry="9" /><ellipse cx="82" cy="11" rx="7" ry="10" />
          <ellipse cx="97" cy="12" rx="7" ry="9" /><ellipse cx="107" cy="28" rx="7" ry="9" />
          <path d="M87 25q8 0 13 8t10 10q5 7-1 13-5 4-22 2-16 2-21-2-6-6-1-13 5-2 10-10t12-8z" />
          <text x="1" y="56" fontFamily="Liberation Sans, Arial, sans-serif" fontSize="38" fontWeight="700">Bai</text>
          <text x="72" y="53" fontFamily="Liberation Sans, Arial, sans-serif" fontSize="23" fontWeight="700" fill="#c8c8ce" stroke="none">du</text>
          <text x="114" y="54" fontFamily="Noto Sans CJK SC, sans-serif" fontSize="30" fontWeight="700">经验</text>
          <text x="3" y="81" fontFamily="Liberation Sans, Arial, sans-serif" fontSize="21" strokeWidth=".5">jingyan.baidu.com</text>
        </svg>
      </Watermark>
    </Window>
  );
}
